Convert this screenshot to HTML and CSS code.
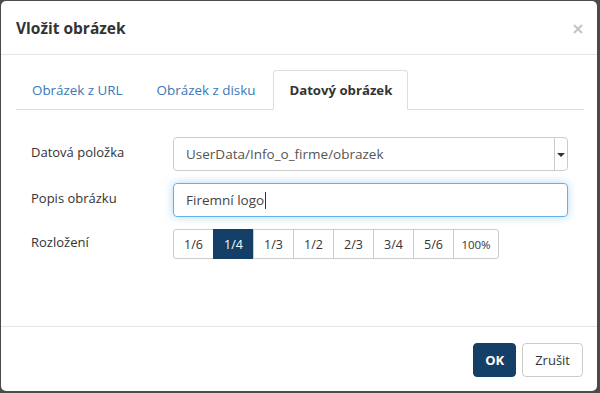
FILE: index.html
```html
<!DOCTYPE html>
<html lang="cs">
<head>
    <meta charset="utf-8">
    <title>Vložit obrázek</title>
    <link rel="stylesheet" href="styles.css">
</head>
<body>
    <div class="modal">
        <div class="modal-header">
            <h4 class="modal-title">Vložit obrázek</h4>
            <span class="close">
                <svg width="10" height="10" viewBox="0 0 10 10"><path d="M1 1L9 9M9 1L1 9" stroke="#c4c4c4" stroke-width="2"/></svg>
            </span>
        </div>
        <div class="modal-body">
            <ul class="nav-tabs">
                <li><a>Obrázek z URL</a></li>
                <li><a>Obrázek z disku</a></li>
                <li class="active"><a>Datový obrázek</a></li>
            </ul>
            <div class="form">
                <label>Datová položka</label>
                <div class="field select">
                    <span>UserData/Info_o_firme/obrazek</span>
                    <span class="select-btn"><i class="caret"></i></span>
                </div>

                <label>Popis obrázku</label>
                <div class="field focus">Firemní logo<span class="cursor"></span></div>

                <label>Rozložení</label>
                <div class="btn-group">
                    <div class="btn">1/6</div>
                    <div class="btn active">1/4</div>
                    <div class="btn">1/3</div>
                    <div class="btn">1/2</div>
                    <div class="btn">2/3</div>
                    <div class="btn">3/4</div>
                    <div class="btn">5/6</div>
                    <div class="btn wide">100%</div>
                </div>
            </div>
        </div>
        <div class="modal-footer">
            <button class="button primary">OK</button>
            <button class="button">Zrušit</button>
        </div>
    </div>
</body>
</html>
```

FILE: styles.css
```css
html, body {
    margin: 0;
    height: 100%;
}
body {
    background-color: #4b4b4b;
    padding: 1px 3px 2px 1px;
    box-sizing: border-box;
    font-family: "Open Sans", "Liberation Sans", sans-serif;
    font-size: 13px;
    color: #333;
}
.modal {
    height: 100%;
    background-color: white;
    border-radius: 5px;
    display: flex;
    flex-direction: column;
}
.modal-header {
    height: 53px;
    border-bottom: 1px solid #e5e5e5;
    padding: 0 15px;
    display: flex;
    align-items: center;
    justify-content: space-between;
}
.modal-title {
    margin: 0;
    font-size: 15.5px;
    font-weight: bold;
    color: #333;
}
.close {
    display: flex;
    margin-right: -1px;
    margin-top: 2px;
}
.modal-body {
    flex: 1;
    padding: 15px 13px 0 15px;
}
.nav-tabs {
    list-style: none;
    margin: 0;
    padding: 0;
    display: flex;
    border-bottom: 1px solid #ddd;
}
.nav-tabs li {
    margin-right: 2px;
    margin-bottom: -1px;
}
.nav-tabs a {
    display: block;
    padding: 10px 15px;
    line-height: 18px;
    font-size: 13.4px;
    border: 1px solid transparent;
    border-radius: 4px 4px 0 0;
    color: #3a78b8;
}
.nav-tabs .active a {
    background-color: white;
    border-color: #ddd #ddd transparent;
    color: #333;
    font-weight: bold;
    font-size: 13.2px;
}
.form {
    display: grid;
    grid-template-columns: 142px 395px;
    row-gap: 12px;
    padding: 27px 0 0 15px;
    align-items: center;
}
.form label {
    line-height: 20px;
    margin-top: -4px;
}
.field {
    height: 34px;
    box-sizing: border-box;
    border: 1px solid #ccc;
    border-radius: 4px;
    padding: 0 12px;
    display: flex;
    align-items: center;
    font-size: 13.5px;
    color: #555;
}
.select {
    justify-content: space-between;
    padding-right: 0;
}
.select-btn {
    width: 12px;
    height: 100%;
    border-left: 1px solid #ccc;
    display: flex;
    align-items: center;
    justify-content: center;
}
.caret {
    width: 0;
    height: 0;
    border-left: 4px solid transparent;
    border-right: 4px solid transparent;
    border-top: 4px solid #333;
    margin-top: 1px;
}
.focus {
    border-color: #66afe9;
    box-shadow: 0 0 8px rgba(102, 175, 233, 0.5);
    color: #444;
}
.cursor {
    display: inline-block;
    width: 1px;
    height: 17px;
    background-color: #333;
    margin-left: 1px;
}
.btn-group {
    display: flex;
}
.btn {
    width: 41px;
    height: 30px;
    box-sizing: border-box;
    border: 1px solid #ccc;
    margin-left: -1px;
    display: flex;
    align-items: center;
    justify-content: center;
    font-size: 12.5px;
    color: #333;
}
.btn:first-child {
    margin-left: 0;
    border-radius: 3px 0 0 3px;
}
.btn.wide {
    width: 46px;
    border-radius: 0 3px 3px 0;
    font-size: 11.5px;
}
.btn.active {
    background-color: #143f66;
    border-color: #143f66;
    color: white;
}
.modal-footer {
    border-top: 1px solid #e5e5e5;
    padding: 16px 14px 14px;
    display: flex;
    justify-content: flex-end;
    gap: 6px;
}
.button {
    height: 34px;
    border: 1px solid #ccc;
    border-radius: 4px;
    background-color: white;
    padding: 0 12px;
    font-family: inherit;
    font-size: 13px;
    color: #333;
}
.button.primary {
    background-color: #143f66;
    border-color: #143f66;
    color: white;
    font-weight: bold;
    padding: 0 11px;
}
```
